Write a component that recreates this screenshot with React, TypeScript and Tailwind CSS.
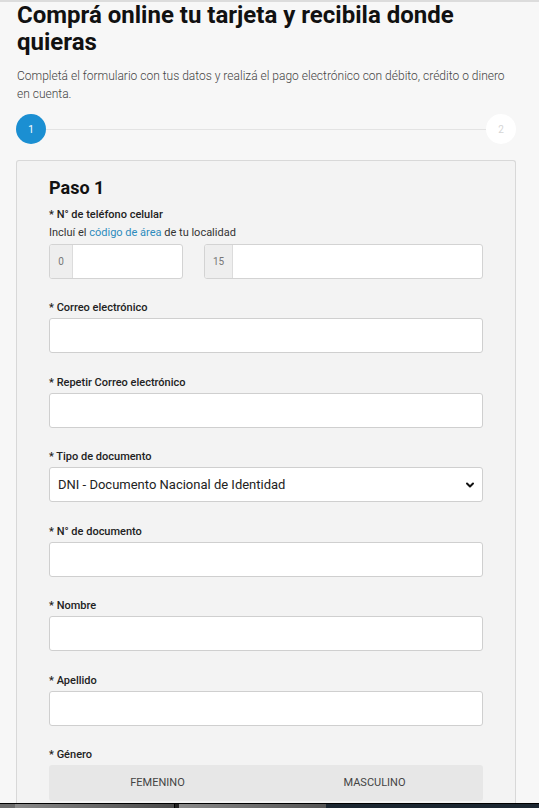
import { ChevronDown } from "lucide-react";

function Label({ children }: { children: React.ReactNode }) {
  return <label className="block h-4 text-[11px] leading-4 font-medium text-[#222]">* {children}</label>;
}

function Field({ label }: { label: string }) {
  return (
    <div>
      <Label>{label}</Label>
      <input className="mt-[2px] block h-[35px] w-full rounded-[3px] border border-[#cfcfcf] bg-white outline-none" />
    </div>
  );
}

function PrefixInput({ prefix, box, className }: { prefix: string; box: string; className: string }) {
  return (
    <div className={`flex h-[35px] overflow-hidden rounded-[3px] border border-[#d3d3d3] bg-white ${className}`}>
      <span className={`flex items-center justify-center border-r border-[#dcdcdc] bg-[#eeeeee] text-[10px] text-[#777] ${box}`}>
        {prefix}
      </span>
      <input className="min-w-0 flex-1 outline-none" />
    </div>
  );
}

export default function App() {
  return (
    <div className="min-h-[808px] border-t-2 border-[#dcdcdc] bg-[#f7f7f7] font-['Roboto',sans-serif]">
      <div className="pl-[17px] pr-[23px]">
        <h1 className="text-[24px] font-bold leading-[27px] text-[#111]">
          Comprá online tu tarjeta y recibila donde quieras
        </h1>
        <p className="mt-[11px] text-[12px] font-light leading-[18px] text-[#444]">
          Completá el formulario con tus datos y realizá el pago electrónico con débito, crédito o dinero en cuenta.
        </p>
      </div>

      {/* Stepper */}
      <div className="mt-[11px] flex items-center pl-[16px] pr-[23px]">
        <span className="flex h-[30px] w-[30px] items-center justify-center rounded-full bg-[#1b8fd2] text-[10px] text-white">
          1
        </span>
        <span className="h-px flex-1 bg-[#e3e3e3]" />
        <span className="flex h-[30px] w-[30px] items-center justify-center rounded-full bg-white text-[10px] text-[#d5d5d5]">
          2
        </span>
      </div>

      {/* Card */}
      <div className="mx-[16px] mt-[16px] w-[500px] rounded-t-[3px] border border-b-0 border-[#d8d8d8] bg-[#f3f3f3] pb-10 pl-[32px] pr-[32px] pt-[15px]">
        <h2 className="text-[18px] font-bold leading-6 text-[#111]">Paso 1</h2>

        <div className="mt-[7px]">
          <Label>N° de teléfono celular</Label>
          <p className="mt-[2px] text-[11px] leading-4 text-[#333]">
            Incluí el <span className="text-[#2d8bbd]">código de área</span> de tu localidad
          </p>
          <div className="mt-[3px] flex gap-[21px]">
            <PrefixInput prefix="0" box="w-[23px]" className="w-[134px]" />
            <PrefixInput prefix="15" box="w-[28px]" className="flex-1" />
          </div>
        </div>

        <div className="mt-[21px] flex flex-col gap-[21.5px]">
          <Field label="Correo electrónico" />
          <Field label="Repetir Correo electrónico" />

          <div>
            <Label>Tipo de documento</Label>
            <div className="mt-[2px] flex h-[35px] items-center justify-between rounded-[3px] border border-[#cfcfcf] bg-white pl-[8px] pr-[6px]">
              <span className="text-[13px] text-[#222]">DNI - Documento Nacional de Identidad</span>
              <ChevronDown className="h-[12px] w-[12px] text-[#111]" strokeWidth={4} />
            </div>
          </div>

          <Field label="N° de documento" />
          <Field label="Nombre" />
          <Field label="Apellido" />

          <div>
            <Label>Género</Label>
            <div className="mt-[2px] grid h-[36px] grid-cols-2 rounded-[3px] bg-[#e7e7e7] text-[11px] text-[#444]">
              <span className="flex items-center justify-center">FEMENINO</span>
              <span className="flex items-center justify-center">MASCULINO</span>
            </div>
          </div>
        </div>
      </div>

      {/* taskbar edge */}
      <div className="fixed inset-x-0 bottom-0 flex h-[5px] border-t border-black bg-[#1c2731]">
        <span className="w-[15px] bg-[#6b6b6b]" />
        <span className="w-[160px] border-r border-black bg-gradient-to-r from-[#8a8a8a] to-[#4a4a4a]" />
        <span className="w-[4px] bg-[#222]" />
        <span className="w-[147px] bg-gradient-to-r from-[#8a8a8a] to-[#555]" />
      </div>
    </div>
  );
}
